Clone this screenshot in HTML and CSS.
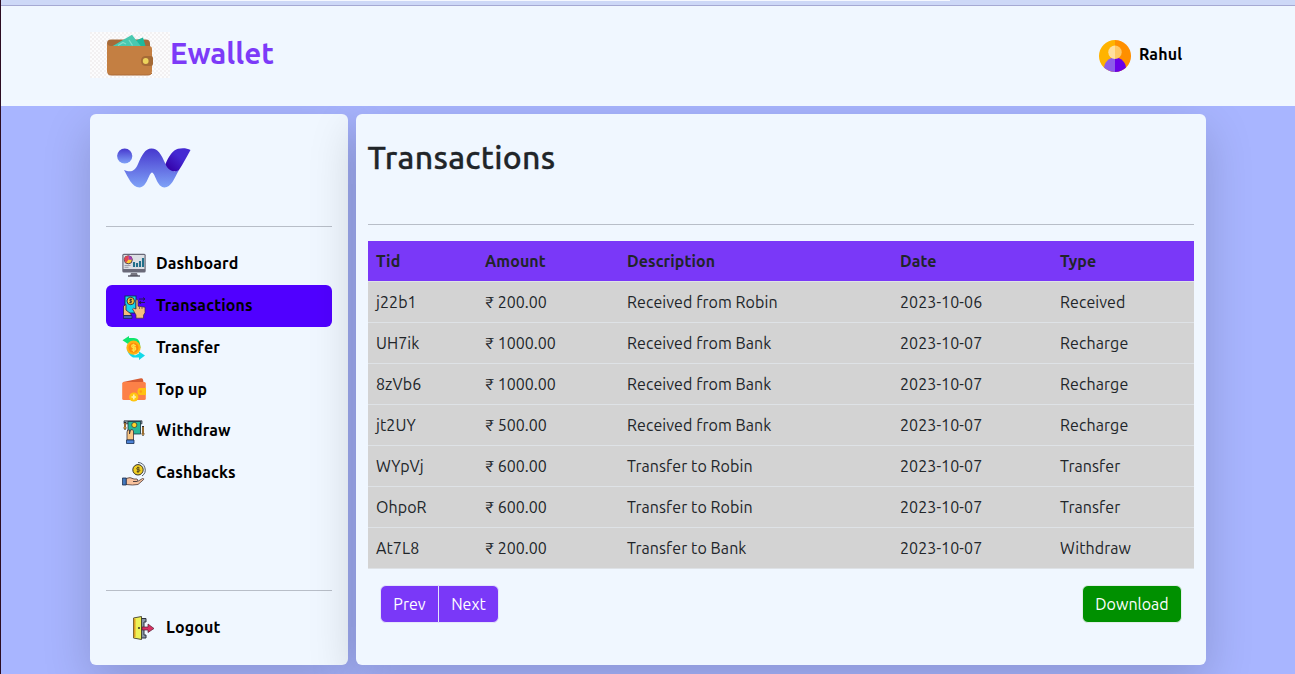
FILE: index.html
```html
<!DOCTYPE html>
<html lang="en">
<head>
<meta charset="utf-8">
<title>Ewallet</title>
<link rel="stylesheet" href="styles.css">
</head>
<body>
<div class="toolbar"><div class="address"></div></div>
<header class="header">
  <div class="brand">
    <svg class="wallet" viewBox="0 0 80 46">
      <defs><pattern id="chk" width="4" height="4" patternUnits="userSpaceOnUse"><rect width="4" height="4" fill="#fcfcfd"/><path d="M0 0h2v2h-2zM2 2h2v2h-2z" fill="#f3f1f2"/></pattern></defs>
      <rect width="80" height="46" fill="url(#chk)"/>
      <rect x="17" y="7.500" width="43" height="20" rx="4" fill="#a56a39"/>
      <path d="M47 8l6-2.500 3 10H44z" fill="#1fb89c"/>
      <path d="M21 15L42 2.700l9.500 12.300z" fill="#48c9b0"/>
      <path d="M28 13.500l5-3 3 1.500m3-4l3.500 5.500" fill="none" stroke="#83dccb" stroke-width="1.300"/>
      <path d="M17 11q1 3 4 3h38q3 0 3 3v22q0 4-4 4H21q-4 0-4-4z" fill="#c47f42"/>
      <path d="M18 41.500q1 1.500 3 1.500h37q3 0 4-2" fill="none" stroke="#ad6c38"/>
      <path d="M56 24h5q2 0 2 2v6q0 2-2 2h-5q-5 0-5-5t5-5z" fill="#a56a36"/>
      <circle cx="55.700" cy="29" r="2.900" fill="#edd35c"/>
    </svg>
    <h1 class="brand-name">Ewallet</h1>
  </div>
  <div class="user">
    <svg class="avatar" viewBox="0 0 32 32">
      <defs><clipPath id="face"><circle cx="16" cy="16" r="16"/></clipPath></defs>
      <g clip-path="url(#face)">
        <path d="M0 0h16v32H0z" fill="#ffb300"/><path d="M16 0h16v32H16z" fill="#ff8f00"/>
        <path d="M16 17.500A11 11 0 0 0 5 28.500V32h11z" fill="#8b5cea"/><path d="M16 17.500a11 11 0 0 1 11 11V32H16z" fill="#6a00e8"/>
        <path d="M16 5.500a6.700 6.700 0 0 0 0 13.400z" fill="#ffdf9e"/><path d="M16 5.500a6.700 6.700 0 0 1 0 13.400z" fill="#ffc865"/>
      </g>
    </svg>
    <span class="user-name">Rahul</span>
  </div>
</header>
<div class="content">
  <aside class="panel sidebar">
    <svg class="logo" viewBox="0 0 74 40">
      <defs>
        <linearGradient id="lg" x1="0" y1="0" x2="0" y2="1"><stop offset="0" stop-color="#4637ce"/><stop offset="1" stop-color="#7fa2f7"/></linearGradient>
        <linearGradient id="leaf" x1="1" y1="0" x2="0" y2="1"><stop offset=".4" stop-color="#4429d2"/><stop offset=".9" stop-color="#3400a8"/></linearGradient>
      </defs>
      <circle cx="7.700" cy="8" r="7.600" fill="url(#lg)"/>
      <path d="M7 22C14 25 18 23 21 16 25 7 28 .5 34.500.5 41 .5 44 6 48.500 16L57 23.500 62 22C57 31 54 39.500 47.500 39.500 40 39.500 38 24.500 35 24.500S30 39.500 22.500 39.500C15 39.500 11 29 7 22z" fill="url(#lg)"/>
      <path d="M48.500 16C52 8 56 2 61 .8 65 0 70 0 73.500 2 69 10 66 16 62 22 58 25 51 23 48.500 16z" fill="url(#leaf)"/>
    </svg>
    <hr class="rule">
    <nav class="nav">
      <a class="nav-item"><svg class="icon" viewBox="0 0 24 24">
        <path d="M9 20h6l1 3H8z" fill="#777681"/><path d="M6 23h12" stroke="#4b4b58" stroke-width="1.300"/>
        <rect x=".3" y=".7" width="23.400" height="18.800" rx="1.500" fill="#696978"/><rect x="1.500" y="2" width="21" height="14" fill="#dcdfe4"/>
        <circle cx="6.300" cy="6.800" r="4" fill="#ffce38" stroke="#3b3052" stroke-width=".9"/><path d="M6.300 6.800V2.800a4 4 0 0 1 4 4z" fill="#a13cb5"/><path d="M2.300 6.800a4 4 0 0 1 4-4v4L4 10z" fill="#e34352"/>
        <path d="M12 14V9M15 14v-4M18 14V8M21 14V5" stroke="#22708a" stroke-width="2.100"/><path d="M2.500 12.500h6M2.500 14.300h4" stroke="#8d8b97" stroke-width=".8"/>
      </svg><span class="label">Dashboard</span></a>
      <a class="nav-item active"><svg class="icon" viewBox="0 0 24 24">
        <rect x="3" y="1" width="11" height="17" fill="#15d5ea" stroke="#122b50" stroke-width=".9"/><circle cx="8.700" cy="6" r="3.700" fill="#ffd032" stroke="#28213c" stroke-width=".9"/><path d="M10.200 4.700q-3-.8-2.700.6l2.300 1.200q.2 1.500-2.700.8M8.800 3.500v5" fill="none" stroke="#28213c" stroke-width=".8"/>
        <path d="M17 4h6m-2-1.500L23 4l-2 1.500M23 7.500h-6m2-1.500l-2 1.500L19 9" fill="none" stroke="#211648" stroke-width=".9"/>
        <path d="M1.500 20.500V11l2.500-1.500V15l5 4v1.500z" fill="#f4bc78" stroke="#302443" stroke-width=".8"/>
        <path d="M14 20l-3.500-6q.2-1.500 3.500 0V5.200q1-1.500 2 0v6l7 1v5.500l-1.500 2.500v3H14z" fill="#f6bf7c" stroke="#3a294c" stroke-width=".7"/><path d="M17.500 14v-2M20 14v-2" stroke="#3a294c" stroke-width=".6"/><path d="M1.500 20.500H10v3H1.500z" fill="#4065bc" stroke="#19244e" stroke-width=".7"/>
      </svg><span class="label">Transactions</span></a>
      <a class="nav-item"><svg class="icon" viewBox="0 0 24 24">
        <path d="M.5 4.200L7 0v2h5q5 0 6 6l.5 4-7-4.500L6 10V8z" fill="#10e66e"/><path d="M5 13q1 6 6 8.500h6V24l6-4.500-6-4v2l-4 2z" fill="#13d9e8"/>
        <circle cx="11.500" cy="11.700" r="7.100" fill="#ffb312"/><circle cx="11.500" cy="11.700" r="5" fill="#ff8c08"/><path d="M13.800 9.800q-4-1.800-4 .3t3.500 1.700q1.500 3-3.500 2.200M11.700 7.700v8.300" fill="none" stroke="#ffe047" stroke-width="1.400"/>
      </svg><span class="label">Transfer</span></a>
      <a class="nav-item"><svg class="icon" viewBox="0 0 24 24">
        <path d="M1 4L19 .3q2-.3 2.200 2L22 8H4z" fill="#d65b32"/><rect x=".2" y="4" width="23.600" height="18" rx="1.500" fill="#fc8148"/><path d="M24 10h-6q-2.500 0-2.500 3.500T18 17h6z" fill="#ffc110"/><circle cx="18.800" cy="13.500" r="1.200" fill="#ff9b18"/><circle cx="11.800" cy="19" r="4.600" fill="#ffc510"/><path d="M11.800 16.500v5M9.500 19h4.600" stroke="#fff1ae" stroke-width="1.600"/>
      </svg><span class="label">Top up</span></a>
      <a class="nav-item"><svg class="icon" viewBox="0 0 24 24">
        <path d="M2 .8h18v3H2z" fill="#8995a0" stroke="#202937" stroke-width=".7"/><rect x="6" y="1.500" width="12.500" height="12.500" fill="#25b798" stroke="#193541" stroke-width=".8"/><circle cx="12.300" cy="5" r="2.600" fill="#ffd52b" stroke="#29303a" stroke-width=".7"/>
        <path d="M3 2v7M21 6v8" stroke="#302c31" stroke-width="2"/><path d="M3 3v5M21 7v6" stroke="#ffab35"/><path d="M1.500 7.500L3 10l1.500-2.500M19.500 13.500L21 16l1.500-2.500" fill="#ffab35" stroke="#29303a" stroke-width=".6"/>
        <path d="M5 20v-8q0-3 2.500-2V14l1-4q2-1.500 3 1v9z" fill="#f8c582" stroke="#37303b" stroke-width=".8"/><path d="M4.500 20h7.500v3.500H4.500z" fill="#4c82d6" stroke="#172c4e" stroke-width=".8"/>
      </svg><span class="label">Withdraw</span></a>
      <a class="nav-item"><svg class="icon" viewBox="0 0 24 24">
        <circle cx="16" cy="7.800" r="5.200" fill="#f0ce22" stroke="#37332b"/><path d="M17.700 6q-3-1.300-3 .5t3 1.400q.8 2-3 1.700M16 4.700v6.300" fill="none" stroke="#4b3f18" stroke-width=".9"/><path d="M16 .5a7.400 7.400 0 0 1 4 13.500" fill="none" stroke="#424953" stroke-width=".9"/>
        <path d="M4 16.500q4-2 8 .5h3q2 1-.5 2.500H11h4.500l5-3q2 0 1 1.200L16 22.500q-5 1-12 0z" fill="#f7c19c" stroke="#493938" stroke-width=".8"/><path d="M.4 16h3.800v7H.4z" fill="#4278bd" stroke="#1b2947" stroke-width=".8"/>
      </svg><span class="label">Cashbacks</span></a>
    </nav>
    <hr class="rule rule-bottom">
    <a class="nav-item logout"><svg class="icon" viewBox="0 0 24 24">
      <path d="M8 2.500h5V6h-2v13h2v3H8z" fill="#8996a8" stroke="#303541"/>
      <path d="M.5 2l8-1.500v23l-8-1.500z" fill="#edf156" stroke="#403c2a" stroke-width=".9"/><path d="M.7 2.200l1.800.8v18l-1.800 1z" fill="#df9d25"/><circle cx="6" cy="12" r="1.100" fill="#403c2a"/>
      <path d="M9 11h6V8l6 4.500-6 4V14H9z" fill="#d92f62" stroke="#542135" stroke-width=".7"/>
    </svg><span class="label">Logout</span></a>
  </aside>
  <main class="panel main">
    <h2 class="title">Transactions</h2>
    <hr class="rule">
    <table class="table">
      <colgroup><col class="c-id"><col class="c-amount"><col class="c-desc"><col class="c-date"><col class="c-type"></colgroup>
      <thead><tr><th>Tid</th><th>Amount</th><th>Description</th><th>Date</th><th>Type</th></tr></thead>
      <tbody>
        <tr><td>j22b1</td><td class="money">₹ 200.00</td><td>Received from Robin</td><td>2023-10-06</td><td>Received</td></tr>
        <tr><td>UH7ik</td><td class="money">₹ 1000.00</td><td>Received from Bank</td><td>2023-10-07</td><td>Recharge</td></tr>
        <tr><td>8zVb6</td><td class="money">₹ 1000.00</td><td>Received from Bank</td><td>2023-10-07</td><td>Recharge</td></tr>
        <tr><td>jt2UY</td><td class="money">₹ 500.00</td><td>Received from Bank</td><td>2023-10-07</td><td>Recharge</td></tr>
        <tr><td>WYpVj</td><td class="money">₹ 600.00</td><td>Transfer to Robin</td><td>2023-10-07</td><td>Transfer</td></tr>
        <tr><td>OhpoR</td><td class="money">₹ 600.00</td><td>Transfer to Robin</td><td>2023-10-07</td><td>Transfer</td></tr>
        <tr><td>At7L8</td><td class="money">₹ 200.00</td><td>Transfer to Bank</td><td>2023-10-07</td><td>Withdraw</td></tr>
      </tbody>
    </table>
    <div class="actions">
      <div class="pager"><button class="btn prev">Prev</button><button class="btn next">Next</button></div>
      <button class="btn download">Download</button>
    </div>
  </main>
</div>
</body>
</html>
```
FILE: styles.css
```css
* { box-sizing: border-box; }
body {
  margin: 0;
  height: 674px;
  overflow: hidden;
  background: #a8b5ff;
  border-left: 1px solid #2c0c22;
  color: #212529;
  font: 16px/24px Ubuntu, "Noto Sans", sans-serif;
  display: flex;
  flex-direction: column;
}
.toolbar { height: 6px; flex: none; background: #cdd8f7; border-bottom: 1px solid #a5a9d3; padding: 0 345px 0 119px; }
.address { height: 1px; background: #f5f8ff; }
.header {
  position: relative;
  z-index: 1;
  height: 100px;
  flex: none;
  background: #f0f7ff;
  padding: 0 113px 0 89px;
  display: flex;
  justify-content: space-between;
  align-items: flex-start;
}
.brand { display: flex; padding-top: 27px; }
.wallet { width: 80px; height: 46px; margin-top: -1px; }
.brand-name { margin: 1px 0 0; font-size: 29.5px; line-height: 40px; font-weight: 700; color: #7c3af8; }
.user { display: flex; padding-top: 34px; }
.avatar { width: 32px; height: 32px; }
.user-name { margin: 2px 0 0 8px; font-weight: 600; letter-spacing: .15px; color: #000; width: 43px; }
.content { display: flex; gap: 8px; padding: 8px 0 0 89px; }
.panel { height: 551px; background: #f0f7ff; border-radius: 6px; box-shadow: 0 16px 48px rgba(0, 0, 0, .175); }
.sidebar { width: 258px; padding: 16px; display: flex; flex-direction: column; }
.logo { width: 74px; height: 40px; margin: 18px 0 38px 11px; flex: none; }
.rule { width: 100%; height: 1px; margin: 0; border: 0; flex: none; background: #b8bec8; }
.nav { display: flex; flex-direction: column; margin-top: 16px; }
.nav-item { display: flex; align-items: center; gap: 10px; height: 41.75px; padding: 0 16px; border-radius: 6px; color: #000; font-weight: 600; letter-spacing: .13px; }
.icon { width: 24px; height: 24px; margin-top: 2px; flex: none; }
.label { margin-top: -1.1px; white-space: nowrap; }
.active { background: #5000ff; }
.rule-bottom { margin-top: auto; }
.logout { margin: 15px 0 1px 11px; gap: 9px; }
.main { width: 850px; padding: 23px 12px 0; }
.title { margin: 0 0 49px; height: 38px; font-size: 32px; line-height: 40px; font-weight: 500; letter-spacing: .3px; text-indent: -.5px; -webkit-text-stroke: .3px #212529; }
.table { width: 826px; margin-top: 16px; border-collapse: separate; border-spacing: 0; table-layout: fixed; }
.c-id { width: 109px; }
.c-amount { width: 142px; }
.c-desc { width: 273px; }
.c-date { width: 160px; }
.c-type { width: 142px; }
th, td { height: 41px; padding: 0 8px; text-align: left; border-bottom: 1px solid #dee2e6; white-space: nowrap; letter-spacing: .08px; }
th { background: #7a38f8; font-weight: 700; }
td { background: #d3d3d3; }
.money { letter-spacing: 0; }
.actions { display: flex; justify-content: space-between; padding: 16px 12px 0; }
.pager { display: flex; gap: 1px; }
.btn { height: 38px; padding: 0; border: 1px solid #e5e5fb; border-radius: 6px; background: #7a38f8; color: #fff; font: inherit; }
.prev { width: 59px; border-radius: 6px 0 0 6px; }
.next { width: 61px; margin-left: -2px; border-radius: 0 6px 6px 0; }
.download { width: 100px; background: #009000; border-color: #e0eee8; }
```
